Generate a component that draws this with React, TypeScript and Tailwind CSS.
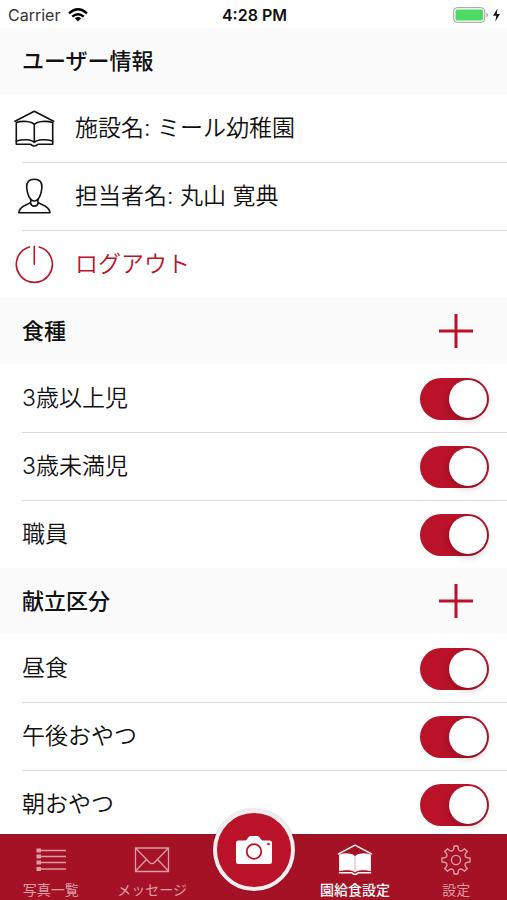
import React, { useState } from "react";

interface IconProps {
  className?: string;
}

function SchoolIcon({ className }: IconProps) {
  return (
    <svg viewBox="0 0 42 38" className={className} fill="none" stroke="currentColor" strokeWidth="1.6" strokeLinecap="round" strokeLinejoin="round">
      <path d="M1 11.3 20.3 1.3 39.6 11.3" />
      <path d="M20.3 14.5C17.5 11.2 8.5 10.4 2.3 12.6V34.2H16.5C17.5 34.2 17.8 36 20.3 36S23.2 34.2 24.2 34.2H38.7V12.6C32.5 10.4 23.2 11.2 20.3 14.5Z" />
      <path d="M20.3 14.5V32.5M2.3 31C8.5 29.2 17.5 29 20.3 32.5 23.2 29 32.5 29.2 38.7 31" />
    </svg>
  );
}

function SchoolSolidIcon({ className }: IconProps) {
  return (
    <svg viewBox="0 0 36 32" className={className} fill="none" stroke="currentColor" strokeWidth="1.5" strokeLinecap="round" strokeLinejoin="round">
      <path d="M1.5 9.8 18 1.2 34.5 9.8" />
      <path d="M17.4 12C15.5 9.6 8 9 2.5 10.8V26.8C8 25.2 15 25.4 17.4 27.6ZM18.6 12C20.7 9.6 28 9 33.5 10.8V26.8C28 25.2 21.2 25.4 18.6 27.6Z" fill="currentColor" strokeWidth="0.8" />
      <path d="M2.5 28.7H14.5C15.5 28.7 16 30.4 18 30.4S20.500 28.700 21.500 28.700H33.500" strokeWidth="1.6" />
    </svg>
  );
}

function PersonIcon({ className }: IconProps) {
  return (
    <svg viewBox="0 0 42 38" className={className} fill="none" stroke="currentColor" strokeWidth="1.6" strokeLinecap="round" strokeLinejoin="round">
      <path d="M20.3 1.300C15 1.300 12.300 4 12.700 9.500 12.900 11.500 13.200 13.500 13.800 15.500 15 20 17 23 20.300 23S25.600 20 26.800 15.500C27.400 13.500 27.700 11.500 27.900 9.500 28.300 4 25.600 1.300 20.300 1.300Z" />
      <path d="M16.900 21.500V23.500C16.500 27 5.800 26.500 4.800 34.700H36C35 26.500 24.200 27 23.800 23.500V21.500M16.500 25C17.500 29.200 23.200 29.200 24.200 25" />
    </svg>
  );
}

function PowerIcon({ className }: IconProps) {
  return (
    <svg viewBox="0 0 42 38" className={className} fill="none" stroke="currentColor" strokeWidth="1.6" strokeLinecap="round">
      <path d="M15.500 1A18 18 0 1 0 25.200 1M20.300 0.300V18.300" />
    </svg>
  );
}

function PlusIcon({ className }: IconProps) {
  return (
    <svg viewBox="0 0 34 34" className={className} stroke="currentColor" strokeWidth="3">
      <path d="M17 0V34M0 17H34" />
    </svg>
  );
}

function ListIcon({ className }: IconProps) {
  return (
    <svg viewBox="0 0 36 32" className={className} stroke="currentColor" strokeWidth="1.3">
      <path d="M7 6.5H33M7 12.5H33M7 18.5H33M7 25H33" />
      <path d="M3.5 6.5H8M3.5 12.5H8M3.5 18.5H8M3.5 25H8" strokeWidth="3.8" />
    </svg>
  );
}

function MailIcon({ className }: IconProps) {
  return (
    <svg viewBox="0 0 36 32" className={className} fill="none" stroke="currentColor" strokeWidth="1.3">
      <path d="M1.500 4H34.500V27.500H1.500ZM1.500 4 15.500 18.500Q18 20.800 20.500 18.500L34.500 4M1.500 27 12.500 15.500M34.500 27 23.500 15.500" />
    </svg>
  );
}

// One tooth every 45 degrees, joined by concave valleys
function gearPath() {
  const point = (radius: number, deg: number) => {
    const rad = (deg * Math.PI) / 180;
    return `${(18 + radius * Math.sin(rad)).toFixed(2)} ${(16 - radius * Math.cos(rad)).toFixed(2)}`;
  };
  let d = "";
  for (let i = 0; i < 8; i++) {
    const a = i * 45;
    d += `${i === 0 ? "M" : "L"}${point(11.5, a - 11)}L${point(14.2, a - 8)}L${point(14.2, a + 8)}L${point(11.5, a + 11)}`;
    d += `C${point(9.6, a + 15)} ${point(9.6, a + 30)} ${point(11.5, a + 34)}`;
  }
  return d + "Z";
}

function GearIcon({ className }: IconProps) {
  return (
    <svg viewBox="0 0 36 32" className={className} fill="none" stroke="currentColor" strokeWidth="1.4" strokeLinejoin="round">
      <path d={gearPath()} />
      <circle cx="18" cy="16" r="4.6" />
    </svg>
  );
}

function CameraIcon({ className }: IconProps) {
  return (
    <svg viewBox="0 0 36 28" className={className}>
      <path d="M2.500 4.500H9C11.500 4.500 12 0 14.500 0H21.500C24 0 24.500 4.500 27 4.500H33.500Q36 4.500 36 7V25.500Q36 28 33.500 28H2.500Q0 28 0 25.500V7Q0 4.500 2.500 4.500Z" fill="currentColor" />
      <circle cx="18" cy="15.5" r="7.3" fill="none" stroke="#b91229" strokeWidth="1.8" />
      <circle cx="32.5" cy="8" r="1.3" fill="#b91229" />
    </svg>
  );
}

function StatusBar() {
  return (
    <div className="grid h-7 shrink-0 grid-cols-3 items-center bg-white pt-0.5 pr-1.5 pl-2 font-['Inter','Liberation_Sans',sans-serif] text-[16px] text-[#333]">
      <div className="flex items-center gap-2">
        <span>Carrier</span>
        <svg viewBox="0 0 20 14" className="h-3.5 w-5 text-black" fill="none" stroke="currentColor" strokeWidth="2.4">
          <path d="M1 5.300Q10 -2.600 19 5.300M4.300 8.700Q10 3.900 15.700 8.700" />
          <path d="M6.800 10.300Q10 7.800 13.200 10.300L10 13.600Z" fill="currentColor" stroke="none" />
        </svg>
      </div>
      <span className="text-center font-semibold text-[#111]">4:28 PM</span>
      <svg viewBox="0 0 48 16" className="h-4 w-12 justify-self-end">
        <rect x="0.7" y="0.7" width="31" height="14.6" rx="3.5" fill="#fff" stroke="#9a9a9a" />
        <rect x="2.5" y="2.5" width="27.5" height="11" rx="1.5" fill="#4cd964" />
        <path d="M33.500 5.500Q36 8 33.500 10.500Z" fill="#8a8a8a" />
        <path d="M44.500 1.500 40 8.700H43.300L42.300 14.500 47 7H43.700Z" fill="#111" />
      </svg>
    </div>
  );
}

interface SectionHeaderProps {
  title: string;
  onAdd?: () => void;
}

function SectionHeader({ title, onAdd }: SectionHeaderProps) {
  return (
    <div className="flex h-[66px] items-center justify-between bg-[#fafafa] pr-[34px] pl-[22px]">
      <h2 className="text-[22px] font-medium">{title}</h2>
      {onAdd && (
        <button type="button" onClick={onAdd} aria-label={`${title}を追加`} className="cursor-pointer text-[#b91229]">
          <PlusIcon className="size-[34px]" />
        </button>
      )}
    </div>
  );
}

interface SwitchListProps {
  items: { id: string; label: string }[];
}

function SwitchList({ items }: SwitchListProps) {
  const [off, setOff] = useState<string[]>([]);

  const toggle = (id: string) =>
    setOff((prev) => (prev.includes(id) ? prev.filter((x) => x !== id) : [...prev, id]));

  return (
    <ul className="pl-[22px]">
      {items.map((item) => (
        <li key={item.id} className="flex h-[68px] items-center justify-between border-t border-[#dcdcdf] pr-[18px] first:border-transparent">
          <label htmlFor={item.id}>{item.label}</label>
          <input
            id={item.id}
            type="checkbox"
            role="switch"
            checked={!off.includes(item.id)}
            onChange={() => toggle(item.id)}
            className="flex h-[42px] w-[69px] cursor-pointer appearance-none items-center rounded-full bg-gray-300 px-0.5 before:size-[38px] before:rounded-full before:bg-white before:shadow-[0_3px_7px_rgba(0,0,0,0.2)] checked:justify-end checked:bg-[#b91229]"
          />
        </li>
      ))}
    </ul>
  );
}

const mealTypes = [
  { id: "over3", label: "3歳以上児" },
  { id: "under3", label: "3歳未満児" },
  { id: "staff", label: "職員" },
];

const menuTypes = [
  { id: "lunch", label: "昼食" },
  { id: "afternoon-snack", label: "午後おやつ" },
  { id: "morning-snack", label: "朝おやつ" },
];

const tabs = [
  { label: "写真一覧", href: "#photos", Icon: ListIcon },
  { label: "メッセージ", href: "#messages", Icon: MailIcon },
  null,
  { label: "園給食設定", href: "#meals", Icon: SchoolSolidIcon, active: true },
  { label: "設定", href: "#settings", Icon: GearIcon },
];

function TabBar() {
  return (
    <nav className="relative grid h-[66px] shrink-0 grid-cols-5 border-t border-[#8f1224] bg-[#a51226]">
      {tabs.map((tab) =>
        tab ? (
          <a
            key={tab.href}
            href={tab.href}
            className={`flex flex-col items-center gap-1 pt-[9px] text-[14px] leading-5 whitespace-nowrap ${
              tab.active ? "font-medium text-white" : "text-[#dc9ca5]"
            }`}
          >
            <tab.Icon className="h-8 w-9" />
            {tab.label}
          </a>
        ) : (
          <span key="camera" />
        )
      )}
      {/* Camera button rises above the bar */}
      <button
        type="button"
        aria-label="写真を撮る"
        className="absolute -top-[26px] left-1/2 flex size-[82px] -translate-x-1/2 cursor-pointer items-center justify-center rounded-full border-4 border-[#f0eeef] bg-[#b91229] text-white shadow-[0_0_2px_rgba(0,0,0,0.3)]"
      >
        <CameraIcon className="h-7 w-9" />
      </button>
    </nav>
  );
}

export default function App() {
  return (
    <div className="flex h-screen flex-col bg-white font-['Inter','Noto_Sans_CJK_JP',sans-serif] text-[#111]">
      <StatusBar />

      <main className="min-h-0 flex-1 overflow-y-auto text-[23px] font-[350] [scrollbar-width:none]">
        <SectionHeader title="ユーザー情報" />
        <ul className="pl-[22px]">
          <li className="flex h-[68px] items-center gap-[19px] border-t border-transparent">
            <SchoolIcon className="-ml-2 h-[38px] w-[42px]" />
            <span>施設名: ミール幼稚園</span>
          </li>
          <li className="flex h-[68px] items-center gap-[19px] border-t border-[#dcdcdf]">
            <PersonIcon className="-ml-2 h-[38px] w-[42px]" />
            <span>担当者名: 丸山 寛典</span>
          </li>
          <li className="h-[68px] border-t border-[#dcdcdf]">
            <button type="button" className="flex h-full w-full cursor-pointer items-center gap-[19px] text-[#b91229]">
              <PowerIcon className="-ml-2 h-[38px] w-[42px] overflow-visible" />
              <span>ログアウト</span>
            </button>
          </li>
        </ul>

        <SectionHeader title="食種" onAdd={() => {}} />
        <SwitchList items={mealTypes} />

        <SectionHeader title="献立区分" onAdd={() => {}} />
        <SwitchList items={menuTypes} />
      </main>

      <TabBar />
    </div>
  );
}
